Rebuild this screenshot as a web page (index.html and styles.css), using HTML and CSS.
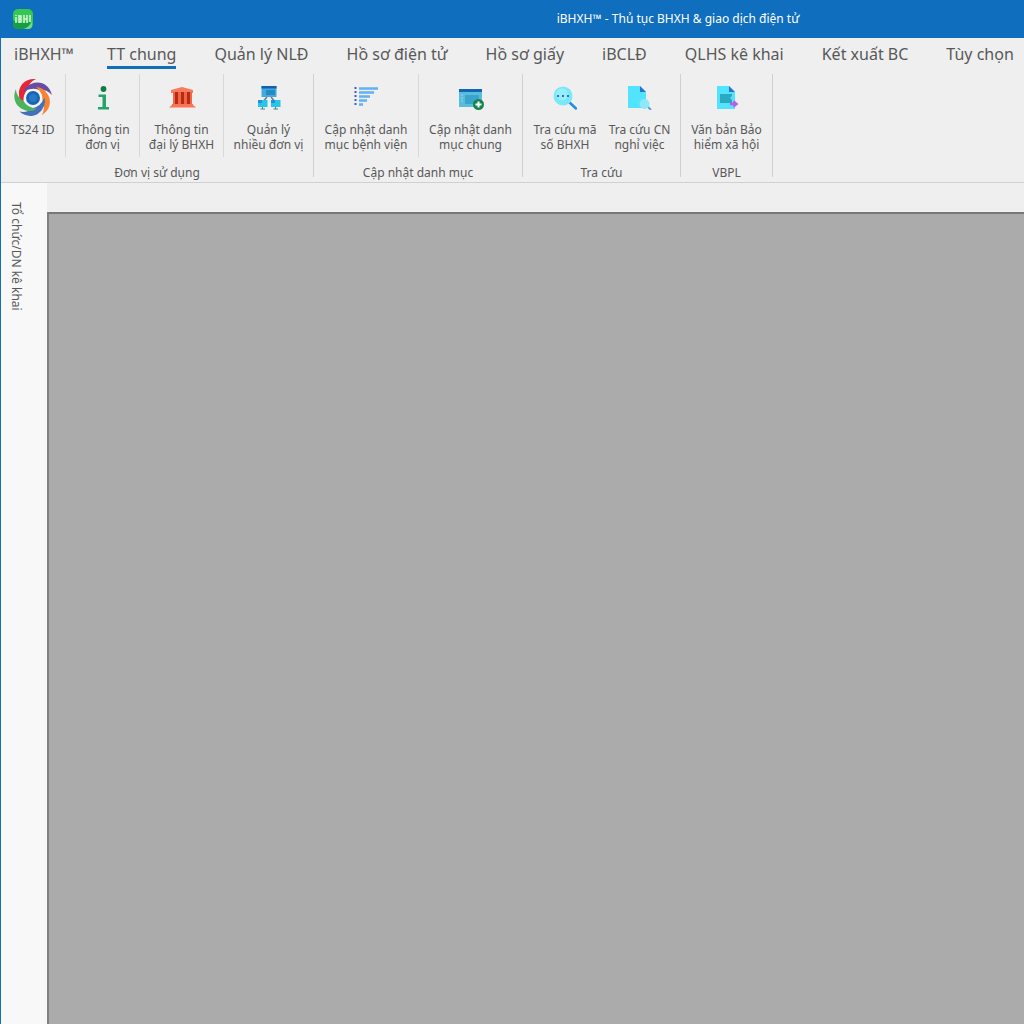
FILE: index.html
```html
<!DOCTYPE html>
<html lang="vi">
<head>
<meta charset="utf-8">
<meta name="viewport" content="width=device-width, initial-scale=1">
<title>iBHXH™ - Thủ tục BHXH &amp; giao dịch điện tử</title>
<link rel="stylesheet" href="styles.css">
</head>
<body>
<header class="titlebar">
  <svg class="app-icon" viewBox="0 0 20 20" aria-hidden="true">
    <rect width="20" height="20" rx="5" fill="#35c653"/>
    <path d="M0 11Q6 15 18 13Q17 17 11 20H5Q0 20 0 15Z" fill="#189e42"/>
    <path d="M11 20Q17 18 19 12V16Q19 20 15 20Z" fill="#72dc8a"/>
    <path d="M3 8v6M3 6v1M6 6v8M6 7h2v6h-2M6 10h2M11 6v8M14 6v8M11 10h3M17 6v7" fill="none" stroke="#d5f3da" stroke-width="1.5"/>
  </svg>
  <h1 class="title">iBHXH™ - Thủ tục BHXH &amp; giao dịch điện tử</h1>
</header>
<div class="window">
  <nav class="tabs">
    <a class="tab tab-first" href="#">iBHXH™</a>
    <a class="tab tab-active" href="#" aria-current="page">TT chung</a>
    <a class="tab" href="#">Quản lý NLĐ</a>
    <a class="tab" href="#">Hồ sơ điện tử</a>
    <a class="tab" href="#">Hồ sơ giấy</a>
    <a class="tab" href="#">iBCLĐ</a>
    <a class="tab" href="#">QLHS kê khai</a>
    <a class="tab" href="#">Kết xuất BC</a>
    <a class="tab" href="#">Tùy chọn</a>
  </nav>
  <div class="ribbon">
    <section class="group">
      <div class="tools">
        <button class="tool w-65" type="button">
          <svg class="icon icon-large" viewBox="-20 -20 40 40" aria-hidden="true">
            <path d="M3-19C-8-20-15-12-14-3Q-14 3-9 7Q-11-2-6-8Q-4-16 3-19Z" fill="#e52635"/>
            <path d="M3-19C-8-20-15-12-14-3Q-14 3-9 7Q-11-2-6-8Q-4-16 3-19Z" fill="#6a4ba3" transform="rotate(72)"/>
            <path d="M3-19C-8-20-15-12-14-3Q-14 3-9 7Q-11-2-6-8Q-4-16 3-19Z" fill="#f68432" transform="rotate(144)"/>
            <path d="M3-19C-8-20-15-12-14-3Q-14 3-9 7Q-11-2-6-8Q-4-16 3-19Z" fill="#456fbd" transform="rotate(216)"/>
            <path d="M3-19C-8-20-15-12-14-3Q-14 3-9 7Q-11-2-6-8Q-4-16 3-19Z" fill="#4bb45b" transform="rotate(288)"/>
            <circle r="9" fill="#f3f7fb"/><circle r="7" fill="#1766b5"/><circle r="4" fill="#2878c4"/>
          </svg>
          <span>TS24 ID</span>
        </button>
        <button class="tool w-74" type="button">
          <svg class="icon" viewBox="0 0 24 24" aria-hidden="true">
            <circle cx="12.500" cy="3" r="2.900" fill="#127a45"/>
            <path d="M7.500 8.500h7.500v12.500h3v2.500H7v-2.500h4.500v-10h-4Z" fill="#24a567"/>
          </svg>
          <span>Thông tin<br>đơn vị</span>
        </button>
        <button class="tool w-84" type="button">
          <svg class="icon icon-wide" viewBox="0 0 28 24" aria-hidden="true">
            <path d="M3 4L14 1L25 4V7H3Z" fill="#f87c5b"/>
            <path d="M5 6h19v12H5Z" fill="#ef6846"/>
            <path d="M7 6h3v12H7ZM13 6h3v12h-3ZM19 6h3v12h-3Z" fill="#b82a14"/>
            <path d="M4 18h21v1l3 2.500H1L4 19Z" fill="#f87556"/>
          </svg>
          <span>Thông tin<br>đại lý BHXH</span>
        </button>
        <button class="tool tool-last" type="button">
          <svg class="icon" viewBox="0 0 24 24" aria-hidden="true">
            <path d="M10 11L5 17M14 11L19 17" stroke="#687b88" stroke-width="1.500"/>
            <path d="M4.500 0h15v11h-15Z" fill="#44a9dd"/><path d="M4.500 0h15v2.500h-15Z" fill="#145fa9"/>
            <path d="M9 4h9v5H9Z" fill="#238bc5"/>
            <path d="M1 14h9.500v7H1ZM14 14h9.500v7H14Z" fill="#24c7e8"/>
            <path d="M1 14h4v3H1ZM14 14h4v3h-4Z" fill="#258ce2"/>
            <path d="M5.500 21v2M3.500 23h4.500M18.500 21v2M16.500 23h4.500" stroke="#4d8293"/>
          </svg>
          <span>Quản lý<br>nhiều đơn vị</span>
        </button>
      </div>
      <h2 class="group-title">Đơn vị sử dụng</h2>
    </section>
    <section class="group">
      <div class="tools">
        <button class="tool w-105" type="button">
          <svg class="icon" viewBox="0 0 24 24" aria-hidden="true">
            <path d="M1.500 1v20" stroke="#3d60b5" stroke-width="2" stroke-dasharray="2 2"/>
            <path d="M5 2.500h19M5 6.500h15M5 10.500h11M5 14.500h8M5 18.500h4" stroke="#64b0f2" stroke-width="2.600"/>
          </svg>
          <span>Cập nhật danh<br>mục bệnh viện</span>
        </button>
        <button class="tool tool-last" type="button">
          <svg class="icon icon-wide" viewBox="0 0 28 24" aria-hidden="true">
            <path d="M2 3h23v18H2Z" fill="#58bddd"/><path d="M2 3h23v3H2Z" fill="#1165b6"/>
            <path d="M8 9h14v9H8Z" fill="#39a5cc"/><path d="M4 9h2M4 12h2M4 15h2" stroke="#8bdcef"/>
            <circle cx="21.500" cy="18.500" r="5.500" fill="#14834c"/><path d="M18.500 18.500h6M21.500 15.500v6" stroke="#fff" stroke-width="2"/>
          </svg>
          <span>Cập nhật danh<br>mục chung</span>
        </button>
      </div>
      <h2 class="group-title">Cập nhật danh mục</h2>
    </section>
    <section class="group">
      <div class="tools tools-plain">
        <button class="tool w-84" type="button">
          <svg class="icon" viewBox="0 0 24 24" aria-hidden="true">
            <path d="M16 16L23 22.500" stroke="#218de3" stroke-width="2.500" stroke-linecap="round"/>
            <circle cx="10" cy="10" r="9.500" fill="#7ae7fa"/><circle cx="9" cy="8.500" r="6" fill="#98effb"/>
            <path d="M4 10h2M9 10h2M14 10h2" stroke="#2775ca" stroke-width="2"/>
          </svg>
          <span>Tra cứu mã<br>số BHXH</span>
        </button>
        <button class="tool w-65" type="button">
          <svg class="icon" viewBox="0 0 24 24" aria-hidden="true">
            <path d="M0 0h12l6 6v16H0Z" fill="#52e4ff"/><path d="M12 0v6h6Z" fill="#2f70d3"/>
            <path d="M19 20L23 24" stroke="#4f9edc" stroke-width="1.800"/><circle cx="16.500" cy="18" r="5" fill="#8ee8f7"/>
          </svg>
          <span>Tra cứu CN<br>nghỉ việc</span>
        </button>
      </div>
      <h2 class="group-title">Tra cứu</h2>
    </section>
    <section class="group">
      <div class="tools">
        <button class="tool tool-last" type="button">
          <svg class="icon" viewBox="0 0 24 24" aria-hidden="true">
            <path d="M2 0h12l6 6v17H2Z" fill="#52e4ff"/><path d="M14 0v6h6Z" fill="#2f70d3"/>
            <path d="M5 8h12v2l-2 2 2 2v3H5Z" fill="#2ba9c1"/>
            <path d="M15 18h6M18.500 15.500L21.500 18L18.500 20.500" fill="none" stroke="#c05be9" stroke-width="2.500"/>
          </svg>
          <span>Văn bản Bảo<br>hiểm xã hội</span>
        </button>
      </div>
      <h2 class="group-title">VBPL</h2>
    </section>
  </div>
  <div class="content">
    <aside class="dock"><button class="dock-tab" type="button">Tổ chức/DN kê khai</button></aside>
    <main class="workspace"></main>
  </div>
</div>
</body>
</html>
```
FILE: styles.css
```css
* { box-sizing: border-box; }

body {
  display: flex;
  flex-direction: column;
  min-height: 100vh;
  margin: 0;
  background: #efefef;
  color: #585858;
  font-family: "Noto Sans", "Open Sans", sans-serif;
  font-size: 12px;
  line-height: 16px;
}

button { border: 0; padding: 0; background: transparent; color: inherit; font: inherit; }

.titlebar {
  display: grid;
  grid-template-columns: 320px 1fr;
  align-items: center;
  height: 38px;
  padding-left: 13px;
  background: #106ebe;
}
.app-icon { width: 20px; height: 20px; }
.title { margin: 0; padding-right: 1px; color: #fff; font-size: 12px; font-weight: 400; text-align: center; }

.window { display: flex; flex: 1; flex-direction: column; border-left: 1px solid #106ebe; overflow: hidden; }

.tabs { display: flex; gap: 38px; height: 34px; padding: 5px 0 0 13px; }
.tab { height: 26px; color: #585858; font-size: 16px; line-height: 22px; text-decoration: none; white-space: nowrap; }
.tab-first { margin-right: -5px; }
.tab-active { border-bottom: 3px solid #106ebe; }

.ribbon { display: flex; height: 111px; padding-top: 2px; border-bottom: 1px solid #d0d0d0; }
.group { display: grid; grid-template-rows: 83px 20px; height: 103px; border-right: 1px solid #d0d0d0; }
.group:nth-child(1) { width: 313px; }
.group:nth-child(2) { width: 209px; }
.group:nth-child(3) { width: 158px; }
.group:nth-child(4) { width: 92px; }
.group-title { margin: 0; padding-top: 6px; font-size: 12px; font-weight: 400; line-height: 20px; text-align: center; }
.tools { display: flex; }
.tool { display: flex; flex-direction: column; align-items: center; gap: 12px; padding-top: 12px; border-right: 1px solid #d8d8d8; line-height: 15px; white-space: nowrap; }
.tool-last { flex: 1; border-right: 0; }
.tools-plain .tool { border-right: 0; }
.w-65 { width: 65px; }
.w-74 { width: 74px; }
.w-84 { width: 84px; }
.w-105 { width: 105px; }
.icon { width: 24px; height: 24px; flex: none; }
.icon-wide { width: 28px; }
.icon-large { width: 40px; height: 40px; margin: -8px 0; }

.content { display: flex; flex: 1; }
.dock { width: 46px; padding: 19px 0 0 7px; background: #f8f8f8; }
.dock-tab { writing-mode: vertical-rl; white-space: nowrap; }
.workspace { flex: 1; margin-top: 29px; border-top: 2px solid #777; border-left: 2px solid #808080; background: #ababab; }
```
